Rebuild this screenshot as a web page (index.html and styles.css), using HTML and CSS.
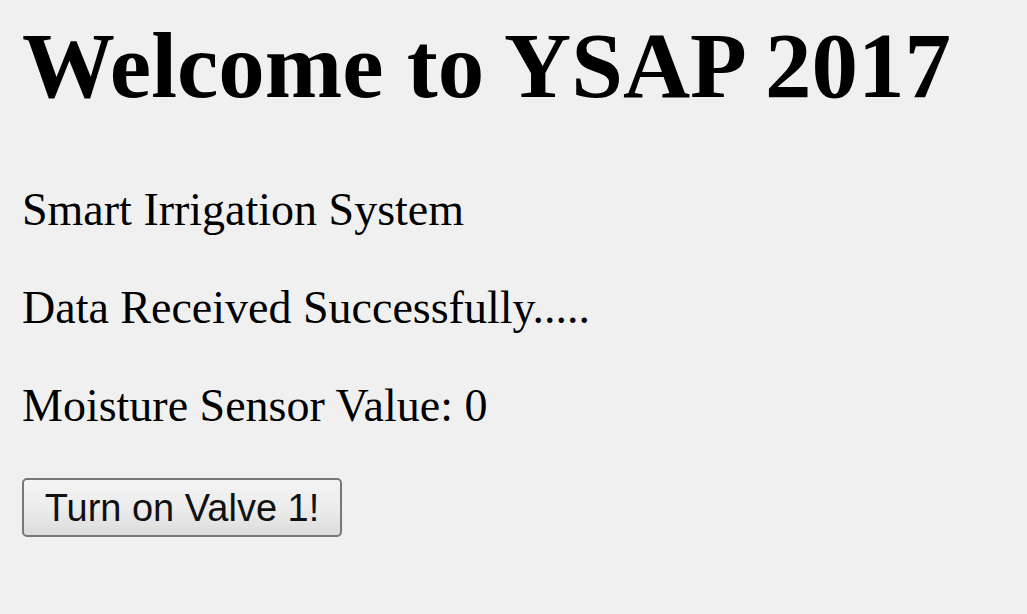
FILE: index.html
```html
<!DOCTYPE html>
<html>
<head>
<meta charset="utf-8">
<title>YSAP 2017</title>
<link rel="stylesheet" href="styles.css">
</head>
<body>
<main class="page">
  <h1 class="title">Welcome to YSAP 2017</h1>
  <p class="line">Smart Irrigation System</p>
  <p class="line">Data Received Successfully.....</p>
  <p class="line">Moisture Sensor Value: 0</p>
  <div class="actions">
    <button class="valve-btn" type="button">Turn on Valve 1!</button>
  </div>
</main>
</body>
</html>
```

FILE: styles.css
```css
html, body {
  margin: 0;
  padding: 0;
  background: #f0f0f0;
}

body {
  width: 1027px;
  height: 614px;
  overflow: hidden;
}

.page {
  padding: 13px 22px 0;
  font-family: "Liberation Serif", "Times New Roman", serif;
  color: #000;
}

.title {
  margin: 0 0 64px;
  font-size: 93px;
  line-height: 106px;
  font-weight: bold;
}

.line {
  margin: 0 0 45px;
  font-size: 46px;
  line-height: 53px;
}

.actions {
  margin-top: 46px;
}

.valve-btn {
  box-sizing: border-box;
  width: 320px;
  height: 59px;
  padding: 0 18px;
  font-family: "Liberation Sans", Arial, sans-serif;
  font-size: 38px;
  line-height: 44px;
  color: #111;
  background: linear-gradient(to bottom, #f4f4f4 0%, #ececec 50%, #dcdcdc 100%);
  border: 2.5px solid #777;
  border-radius: 5px;
  text-align: center;
}
```
